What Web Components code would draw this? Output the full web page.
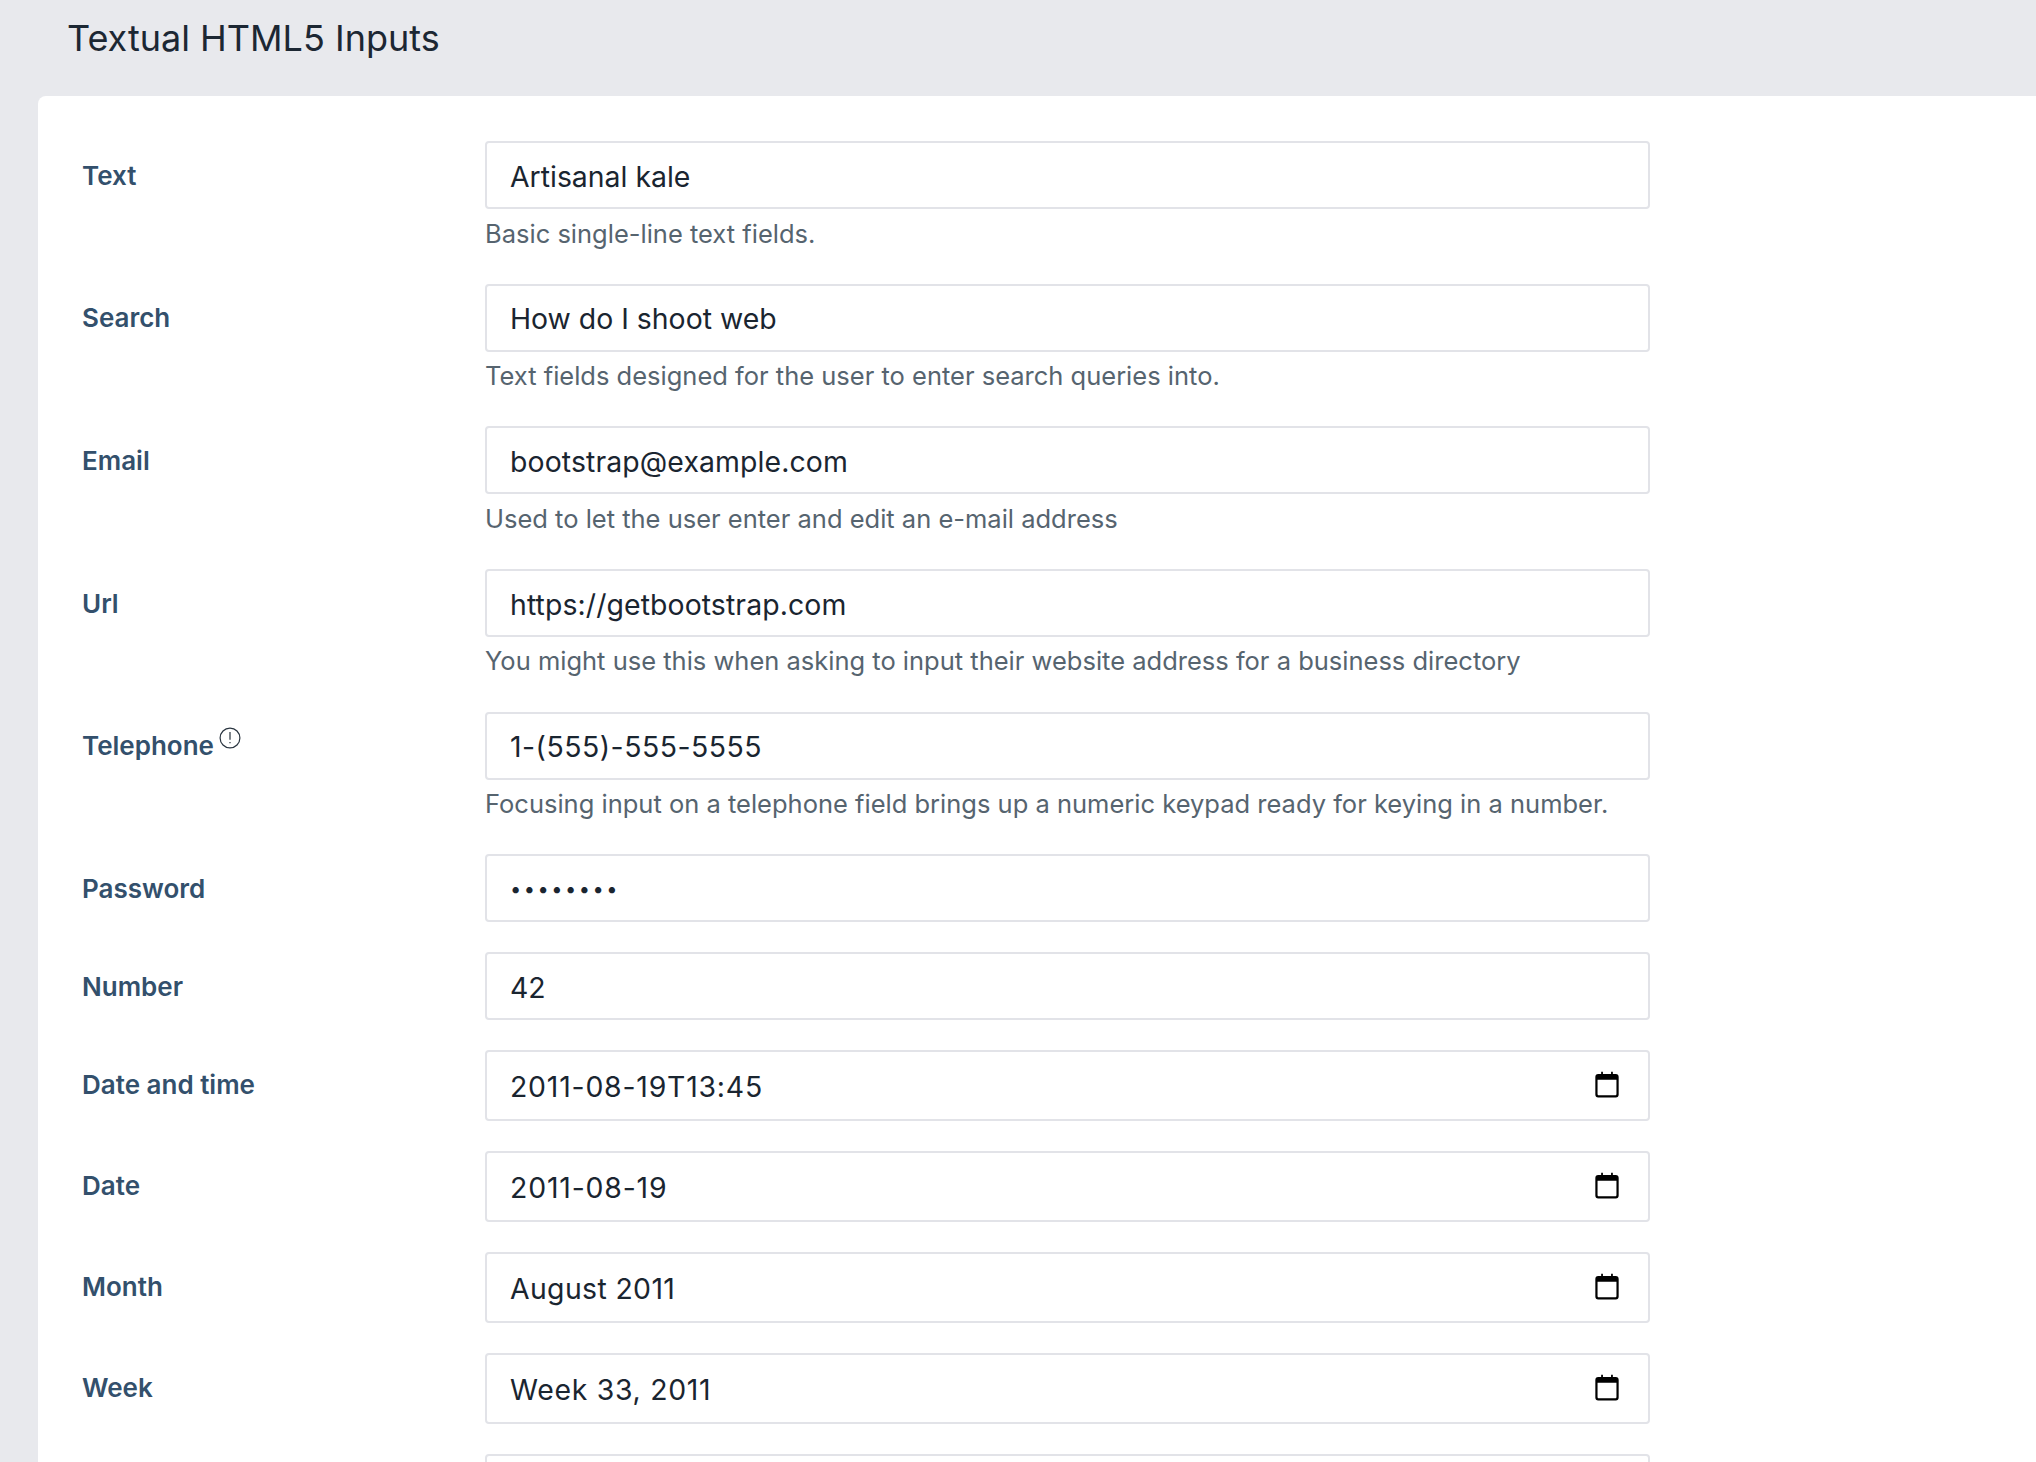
<!DOCTYPE html>
<html>
<head>
<meta charset="utf-8">
<title>Textual HTML5 Inputs</title>
<style>
  html, body { margin: 0; height: 100%; overflow: hidden; background: #e8e9ed; font-family: Inter, "Liberation Sans", sans-serif; }
</style>
</head>
<body>
<page-header>Textual HTML5 Inputs</page-header>
<form-card>
  <form-row label="Text" hint="Basic single-line text fields."><text-field>Artisanal kale</text-field></form-row>
  <form-row label="Search" hint="Text fields designed for the user to enter search queries into."><text-field>How do I shoot web</text-field></form-row>
  <form-row label="Email" hint="Used to let the user enter and edit an e-mail address"><text-field spacing="0.12">bootstrap@example.com</text-field></form-row>
  <form-row label="Url" hint="You might use this when asking to input their website address for a business directory"><text-field spacing="0.1">https://getbootstrap.com</text-field></form-row>
  <form-row label="Telephone" help hint="Focusing input on a telephone field brings up a numeric keypad ready for keying in a number."><text-field spacing="0.5">1-(555)-555-5555</text-field></form-row>
  <form-row label="Password"><text-field password>••••••••</text-field></form-row>
  <form-row label="Number"><text-field>42</text-field></form-row>
  <form-row label="Date and time" tall><text-field calendar spacing="0.8">2011-08-19T13:45</text-field></form-row>
  <form-row label="Date" tall><text-field calendar spacing="0.83">2011-08-19</text-field></form-row>
  <form-row label="Month" tall><text-field calendar spacing="0.37">August 2011</text-field></form-row>
  <form-row label="Week" tall><text-field calendar spacing="0.71">Week 33, 2011</text-field></form-row>
  <form-row label="" tall><text-field calendar></text-field></form-row>
</form-card>

<script>
class PageHeader extends HTMLElement {
    constructor() {
        super();
        this.attachShadow({ mode: 'open' });
        this.shadowRoot.innerHTML = `
            <style>
                :host {
                    display: flex;
                    align-items: center;
                    height: 78px;
                    padding: 0 0 18px 67px;
                    font-size: 36px;
                    font-weight: 400;
                    color: #1c2733;
                }
                span { position: relative; top: -1px; }
            </style>
            <span><slot></slot></span>
        `;
    }
}
customElements.define('page-header', PageHeader);

class FormCard extends HTMLElement {
    constructor() {
        super();
        this.attachShadow({ mode: 'open' });
        this.shadowRoot.innerHTML = `
            <style>
                :host {
                    display: block;
                    box-sizing: border-box;
                    margin-left: 38px;
                    padding: 45.3px 0 0 44px;
                    background: #fff;
                    border-radius: 8px 0 0 0;
                    height: 1366px;
                    overflow: hidden;
                }
            </style>
            <slot></slot>
        `;
    }
}
customElements.define('form-card', FormCard);

class FormRow extends HTMLElement {
    constructor() {
        super();
        this.attachShadow({ mode: 'open' });
        const help = this.hasAttribute('help') ? `
            <svg class="help" viewBox="0 0 20 20" width="22" height="22" fill="none" stroke="#2a3540" stroke-width="1.1">
                <circle cx="10" cy="10" r="9"/><path d="M10 4.6v7M10 13.6v1.2"/>
            </svg>` : '';
        const hint = this.getAttribute('hint');
        this.shadowRoot.innerHTML = `
            <style>
                :host {
                    display: grid;
                    grid-template-columns: 403px 1165px;
                    margin-bottom: 30px;
                }
                .label {
                    font-size: 26px;
                    font-weight: 600;
                    color: #33506c;
                    line-height: 38px;
                    padding-top: ${this.hasAttribute('tall') ? 16 : 15.5}px;
                    white-space: nowrap;
                }
                .help { vertical-align: 6px; margin-left: -2px; }
                .hint {
                    margin-top: 5.4px;
                    font-size: 25.5px;
                    line-height: 38.6px;
                    padding-bottom: .6px;
                    color: #56646f;
                }
            </style>
            <div class="label">${this.getAttribute('label')}${help}</div>
            <div>
                <slot></slot>
                ${hint ? `<div class="hint">${hint}</div>` : ''}
            </div>
        `;
    }
}
customElements.define('form-row', FormRow);

class TextField extends HTMLElement {
    constructor() {
        super();
        this.attachShadow({ mode: 'open' });
        const calendar = this.hasAttribute('calendar') ? `
            <svg class="cal" viewBox="0 0 24 24" width="28" height="28">
                <path fill="#000" fill-rule="evenodd" d="M7 1.5h1.5v2h7v-2H17v2h2.5A2.5 2.5 0 0 1 22 6v15a2.5 2.5 0 0 1-2.5 2.5h-15A2.5 2.5 0 0 1 2 21V6a2.5 2.5 0 0 1 2.5-2.5H7zM3.9 8.3v12.2c0 .7.4 1.1 1.1 1.1h14c.7 0 1.1-.4 1.1-1.1V8.3z"/>
            </svg>` : '';
        const password = this.hasAttribute('password');
        const spacing = this.getAttribute('spacing');
        this.shadowRoot.innerHTML = `
            <style>
                :host {
                    display: flex;
                    align-items: center;
                    justify-content: space-between;
                    box-sizing: border-box;
                    height: ${calendar ? 71 : 68}px;
                    padding: 0 26.7px 0 23px;
                    border: 2px solid #e2e3e8;
                    border-radius: 4px;
                    background: #fff;
                    font-size: ${password ? 20 : 28.4}px;
                    letter-spacing: ${password ? 2.5 : (spacing || 0)}px;
                    color: #1a2530;
                    white-space: nowrap;
                }
                span { position: relative; top: 1px; }
                .cal { position: relative; top: -2px; }
            </style>
            <span><slot></slot></span>
            ${calendar}
        `;
    }
}
customElements.define('text-field', TextField);
</script>
</body>
</html>
